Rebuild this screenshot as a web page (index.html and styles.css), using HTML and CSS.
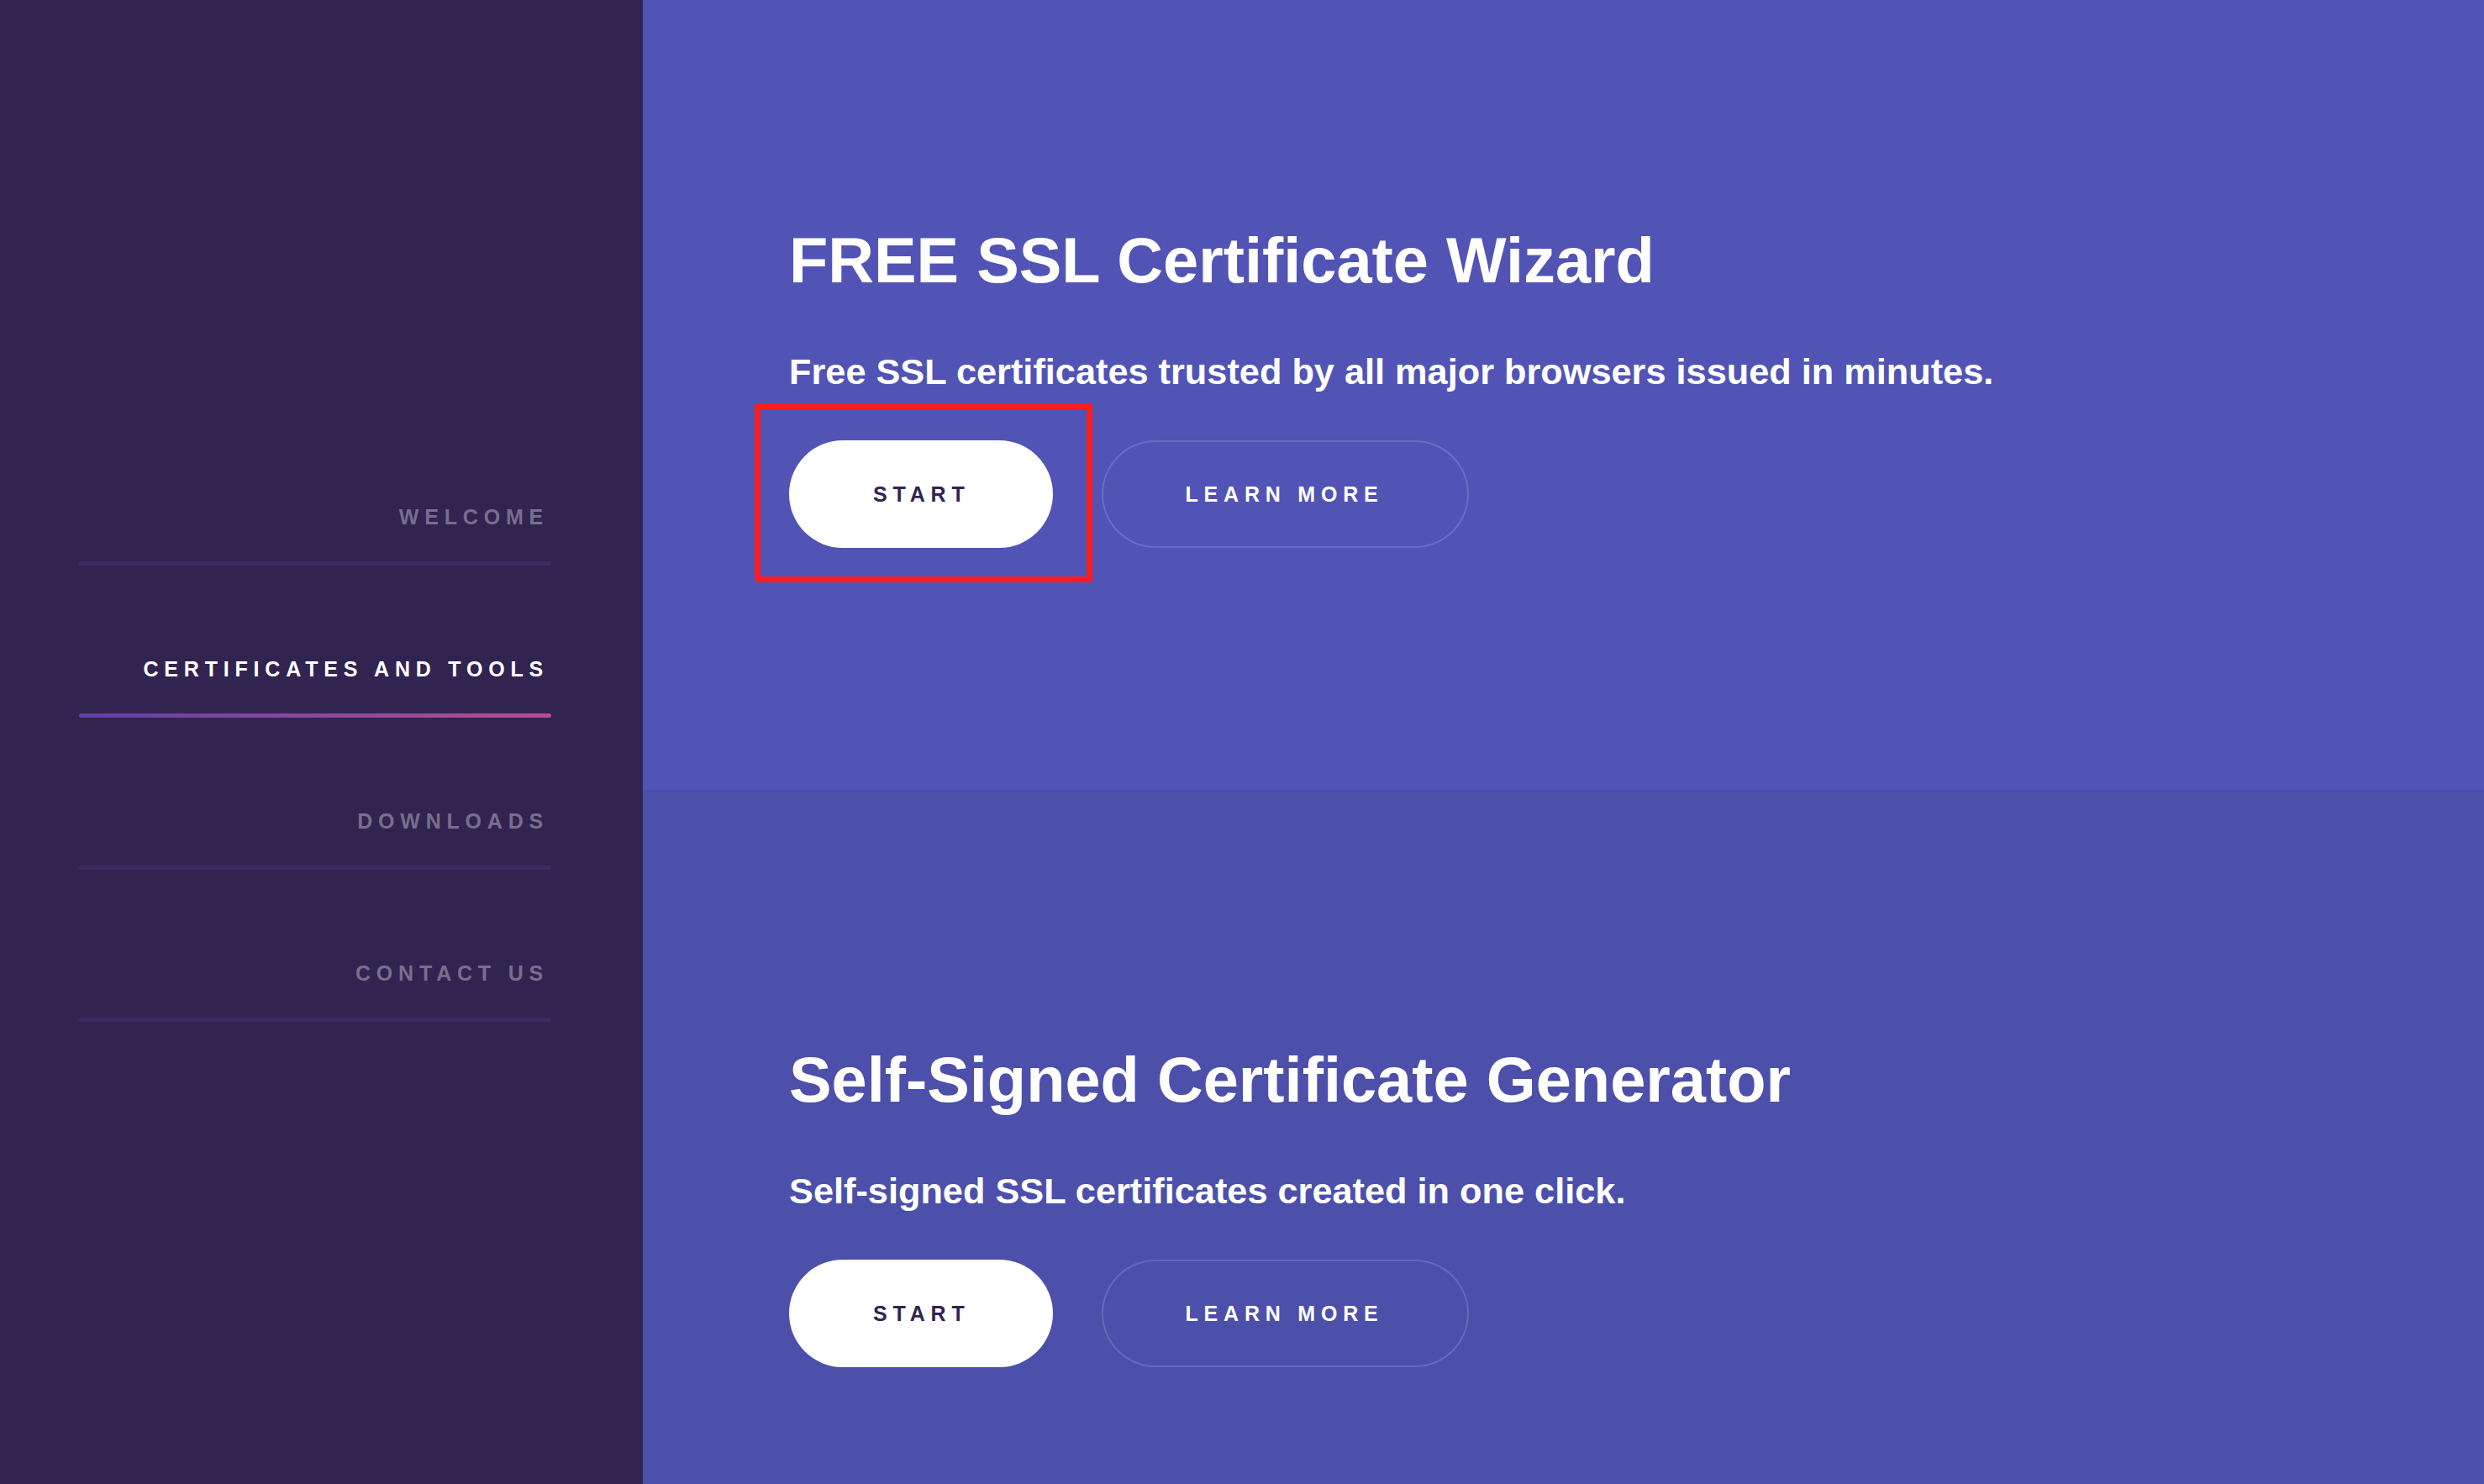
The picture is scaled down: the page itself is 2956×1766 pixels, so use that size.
FILE: index.html
```html
<!DOCTYPE html>
<html lang="en">
<head>
<meta charset="utf-8">
<title>Certificates and Tools</title>
<link rel="stylesheet" href="styles.css">
</head>
<body>
<div class="page">
  <aside class="sidebar">
    <nav class="nav">
      <a class="nav-link" href="#welcome">Welcome</a>
      <a class="nav-link active" href="#tools">Certificates and Tools</a>
      <a class="nav-link" href="#downloads">Downloads</a>
      <a class="nav-link" href="#contact">Contact Us</a>
    </nav>
  </aside>
  <main class="main">
    <section class="wrapper style-a">
      <h2 class="title">FREE SSL Certificate Wizard</h2>
      <p class="lead">Free SSL certificates trusted by all major browsers issued in minutes.</p>
      <div class="actions">
        <div class="action highlighted">
          <a class="button primary" href="#">Start</a>
          <span class="annotation"></span>
        </div>
        <div class="action">
          <a class="button" href="#">Learn More</a>
        </div>
      </div>
    </section>
    <section class="wrapper style-b">
      <h2 class="title">Self-Signed Certificate Generator</h2>
      <p class="lead">Self-signed SSL certificates created in one click.</p>
      <div class="actions">
        <div class="action">
          <a class="button primary" href="#">Start</a>
        </div>
        <div class="action">
          <a class="button" href="#">Learn More</a>
        </div>
      </div>
    </section>
  </main>
</div>
</body>
</html>
```

FILE: styles.css
```css
* { box-sizing: border-box; }

html, body {
  margin: 0;
  padding: 0;
  height: 100%;
  overflow: hidden;
}

body {
  font-family: "Liberation Sans", Arial, Helvetica, sans-serif;
  background: #312450;
  color: #fff;
}

.page {
  display: flex;
  min-height: 1766px;
}

.sidebar {
  width: 765px;
  flex: 0 0 765px;
  background: #312450;
  padding: 493px 0 0 94px;
}

.nav {
  width: 562px;
  display: flex;
  flex-direction: column;
}

.nav-link {
  display: block;
  position: relative;
  padding: 111px 0 45px 0;
  font-size: 25px;
  line-height: 25px;
  font-weight: bold;
  letter-spacing: 6.8px;
  text-transform: uppercase;
  text-align: right;
  text-decoration: none;
  color: rgba(255, 255, 255, 0.35);
  margin-right: 3px;
}

.nav-link::after {
  content: "";
  position: absolute;
  left: 0;
  right: -3px;
  bottom: 0;
  height: 5px;
  border-radius: 5px;
  background: #3c2c62;
}

.nav-link:first-child {
  padding-top: 110px;
}

.nav-link.active {
  color: #fff;
}

.nav-link.active::after {
  background: linear-gradient(to right, #5e42a6, #b74e91);
}

.main {
  flex: 1;
  display: flex;
  flex-direction: column;
}

.wrapper {
  padding-left: 174px;
}

.style-a {
  background: #5154b5;
  padding-top: 272px;
  padding-bottom: 288px;
}

.style-b {
  background: #4c50aa;
  padding-top: 307px;
  padding-bottom: 139px;
}

.title {
  margin: 0;
  font-size: 75.8px;
  line-height: 76px;
  font-weight: bold;
  color: #fff;
}

.lead {
  margin: 73px 0 0 0;
  font-size: 43.3px;
  line-height: 43.5px;
  font-weight: bold;
  color: #fff;
}

.actions {
  display: flex;
  gap: 58px;
  margin-top: 59.5px;
}

.action {
  position: relative;
}

.button {
  display: block;
  height: 128px;
  line-height: 128px;
  padding: 0 101px 0 99px;
  border-radius: 64px;
  font-size: 25px;
  font-weight: bold;
  letter-spacing: 6.8px;
  text-transform: uppercase;
  text-decoration: none;
  color: #fff;
  white-space: nowrap;
  box-shadow: inset 0 0 0 2px rgba(255, 255, 255, 0.15);
}

.button.primary {
  background: #fff;
  color: #312450;
  box-shadow: none;
  padding: 0 99px 0 100px;
}

.annotation {
  position: absolute;
  left: -41px;
  top: -44px;
  width: 402px;
  height: 213px;
  border: 7px solid #ff1e1e;
  border-radius: 4px;
  pointer-events: none;
}
```
